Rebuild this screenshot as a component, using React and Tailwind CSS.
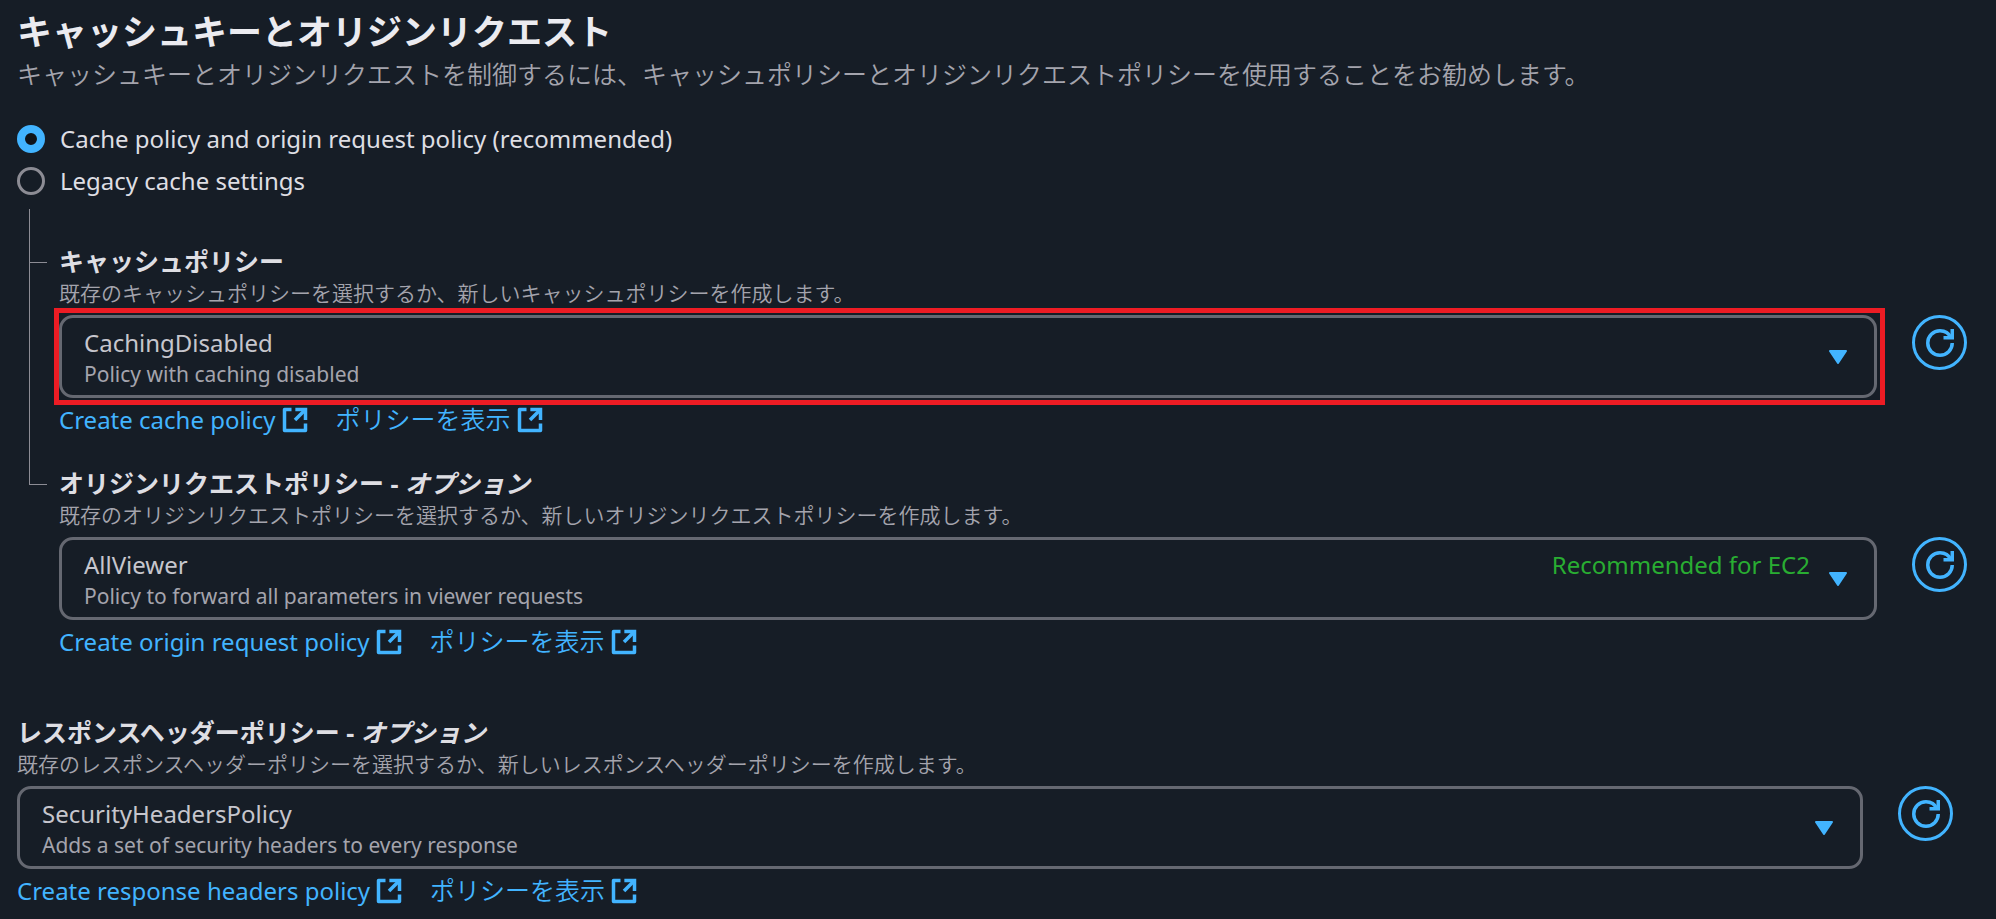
import React, { useId, useState } from 'react';

const ExternalIcon = () => (
  <svg className="size-7 shrink-0" viewBox="0 0 16 16" fill="none" stroke="currentColor" strokeWidth="2" aria-hidden="true">
    <path strokeLinejoin="round" d="M14 10v4H2V2h4" />
    <path d="M8.2 2H14v6" />
    <path d="M14 2 8 8" />
  </svg>
);

const RefreshIcon = () => (
  <svg className="size-7" viewBox="0 0 16 16" fill="none" stroke="currentColor" strokeWidth="2" aria-hidden="true">
    <path d="M15 8c0 3.87-3.13 7-7 7s-7-3.13-7-7 3.13-7 7-7c2.79 0 5.2 1.63 6.33 4" />
    <path d="M10 5h5V0" />
  </svg>
);

const CaretIcon = () => (
  <svg className="w-[18px] h-[14px] shrink-0" viewBox="0 0 18 14" fill="currentColor" stroke="currentColor" strokeWidth="2" strokeLinejoin="round" aria-hidden="true">
    <path d="M1 1h16L9 13z" />
  </svg>
);

const ExternalLink = ({ children }) => (
  <a href="#" className="flex items-center gap-[5px] text-[#42b4ff] hover:text-[#75cfff]">
    {children}
    <ExternalIcon />
  </a>
);

const PolicyField = ({ label, optional, hint, options, createText, highlighted }) => {
  const id = useId();
  const [selected, setSelected] = useState(options[0].name);
  const option = options.find((o) => o.name === selected);

  return (
    <div>
      <label htmlFor={id} className="block text-[25px] leading-[35px] font-bold">
        {label}
        {optional && <> - <i>オプション</i></>}
      </label>
      <p className="text-[21px] leading-7 font-[350] text-[#a4a4ad]">{hint}</p>

      <div className="mt-2 flex items-start gap-[35px]">
        <div className="relative flex grow items-stretch rounded-[14px] border-3 border-[#656871] py-[7px] pl-[22px] pr-[27px] text-[#c6c6cd] focus-within:border-[#42b4ff]">
          <div className="grow">
            <div className="flex justify-between leading-[35px]">
              <span>{option.name}</span>
              {option.tag && <span className="pr-[19px] text-[#29ad32]">{option.tag}</span>}
            </div>
            <div className="text-[21px] leading-7 text-[#a4a4ad]">{option.description}</div>
          </div>
          <div className="flex items-center text-[#42b4ff]">
            <CaretIcon />
          </div>
          {/* Native select covers the box so the whole area is clickable */}
          <select
            id={id}
            value={selected}
            onChange={(e) => setSelected(e.target.value)}
            className="absolute inset-0 cursor-pointer opacity-0"
          >
            {options.map((o) => (
              <option key={o.name} value={o.name}>{o.name}</option>
            ))}
          </select>
          {highlighted && (
            <div className="pointer-events-none absolute -inset-y-[10px] -left-2 -right-[11px] border-5 border-[#ed1c24]" />
          )}
        </div>
        <button
          type="button"
          aria-label="Refresh"
          className="flex size-[55px] shrink-0 items-center justify-center rounded-full border-3 border-[#42b4ff] text-[#42b4ff] hover:bg-[#1d2a39]"
        >
          <RefreshIcon />
        </button>
      </div>

      <div className="mt-1 flex gap-[27px] leading-[35px]">
        <ExternalLink>{createText}</ExternalLink>
        <ExternalLink>
          <span className="text-[25px] font-[350]">ポリシーを表示</span>
        </ExternalLink>
      </div>
    </div>
  );
};

const MODES = [
  { value: 'policy', text: 'Cache policy and origin request policy (recommended)' },
  { value: 'legacy', text: 'Legacy cache settings' },
];

const App = () => {
  const [mode, setMode] = useState('policy');

  return (
    <main
      lang="ja"
      className="min-h-screen bg-[#161d26] pt-[11px] pl-[17px] text-2xl text-[#dedee3] font-['Noto_Sans','Noto_Sans_CJK_JP',sans-serif]"
    >
      <h2 className="text-[35px] leading-[42px] font-bold text-[#ebebf0]">キャッシュキーとオリジンリクエスト</h2>
      <p className="mt-1 text-[25px] leading-[35px] font-[350] text-[#a4a4ad]">
        キャッシュキーとオリジンリクエストを制御するには、キャッシュポリシーとオリジンリクエストポリシーを使用することをお勧めします。
      </p>

      <div className="mt-[29px] flex flex-col gap-[7px]">
        {MODES.map((m) => (
          <label key={m.value} className="flex items-center gap-[15px] leading-[35px]">
            <input
              type="radio"
              name="mode"
              value={m.value}
              checked={mode === m.value}
              onChange={() => setMode(m.value)}
              className="size-7 appearance-none rounded-full border-3 border-[#8c8c94] bg-[#161d26] checked:border-8 checked:border-[#42b4ff] checked:bg-[#0f141a]"
            />
            {m.text}
          </label>
        ))}
      </div>

      {/* Tree lines: trunk on the left, one branch per field */}
      <div className="mt-[11px] pl-3 pr-[29px]">
        <div className="flex gap-3">
          <div className="w-[18px] shrink-0 border-l border-[#8c8c94] pt-[53px]">
            <div className="border-t border-[#8c8c94]" />
          </div>
          <div className="grow pt-[35px] pb-[29px]">
            <PolicyField
              label="キャッシュポリシー"
              hint="既存のキャッシュポリシーを選択するか、新しいキャッシュポリシーを作成します。"
              options={[{ name: 'CachingDisabled', description: 'Policy with caching disabled' }]}
              createText="Create cache policy"
              highlighted
            />
          </div>
        </div>
        <div className="flex gap-3">
          <div className="h-[19px] w-[18px] shrink-0 border-b border-l border-[#8c8c94]" />
          <div className="grow">
            <PolicyField
              label="オリジンリクエストポリシー"
              optional
              hint="既存のオリジンリクエストポリシーを選択するか、新しいオリジンリクエストポリシーを作成します。"
              options={[{
                name: 'AllViewer',
                description: 'Policy to forward all parameters in viewer requests',
                tag: 'Recommended for EC2',
              }]}
              createText="Create origin request policy"
            />
          </div>
        </div>
      </div>

      <div className="mt-14 pr-[43px]">
        <PolicyField
          label="レスポンスヘッダーポリシー"
          optional
          hint="既存のレスポンスヘッダーポリシーを選択するか、新しいレスポンスヘッダーポリシーを作成します。"
          options={[{ name: 'SecurityHeadersPolicy', description: 'Adds a set of security headers to every response' }]}
          createText="Create response headers policy"
        />
      </div>
    </main>
  );
};

export default App;
